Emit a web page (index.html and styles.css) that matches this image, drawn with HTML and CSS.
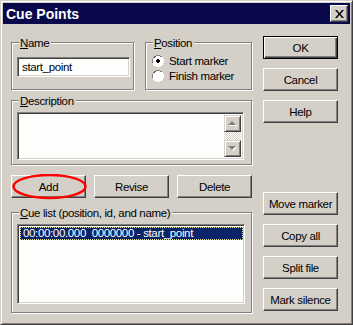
FILE: index.html
```html
<!DOCTYPE html>
<html lang="en">
<head>
    <meta charset="UTF-8">
    <title>Cue Points</title>
    <link rel="stylesheet" href="styles.css">
</head>
<body>

    <div class="window">
        <!-- Title bar -->
        <div class="titlebar">
            <span class="title">Cue Points</span>
            <button class="close" title="Close">
                <svg width="9" height="8" viewBox="0 0 9 8">
                    <path d="M0 0h2l2.5 3 2.5-3h2l-3.5 4 3.5 4h-2l-2.5-3-2.5 3h-2l3.5-4z" fill="#000"/>
                </svg>
            </button>
        </div>

        <div class="content">
            <div class="main">
                <div class="top-row">
                    <div class="group name-group">
                        <span class="legend"><u>N</u>ame</span>
                        <div class="field name-field">start_point</div>
                    </div>
                    <div class="group position-group">
                        <span class="legend"><u>P</u>osition</span>
                        <div class="radio">
                            <svg width="12" height="12" viewBox="0 0 12 12">
                                <path d="M4 0h4v1h2v1h1v2h1v4h-1v2h-1v1h-2v1h-4v-1h-2v-1h-1v-2h-1v-4h1v-2h1v-1h2z" fill="#fff"/>
                                <path d="M4 0h4v1h2v1h-2v-1h-4v1h-2v2h-1v4h-1v-4h1v-2h1v-1h2z" fill="#808080"/>
                                <path d="M4 1h4v1h2v1h-2v-1h-4v1h-1v1h-1v4h-1v-4h1v-2h1v-1h1z" fill="#404040"/>
                                <path d="M2 3h1v-1h1v-1h4v1h2v2h1v4h-1v2h-2v1h-4v-1h-2v-2h-1v-4z" fill="#fff"/>
                                <path d="M5 4h2v1h1v2h-1v1h-2v-1h-1v-2h1z" fill="#000"/>
                            </svg>
                            <span>Start marker</span>
                        </div>
                        <div class="radio">
                            <svg width="12" height="12" viewBox="0 0 12 12">
                                <path d="M4 0h4v1h2v1h1v2h1v4h-1v2h-1v1h-2v1h-4v-1h-2v-1h-1v-2h-1v-4h1v-2h1v-1h2z" fill="#fff"/>
                                <path d="M4 0h4v1h2v1h-2v-1h-4v1h-2v2h-1v4h-1v-4h1v-2h1v-1h2z" fill="#808080"/>
                                <path d="M4 1h4v1h2v1h-2v-1h-4v1h-1v1h-1v4h-1v-4h1v-2h1v-1h1z" fill="#404040"/>
                                <path d="M2 3h1v-1h1v-1h4v1h2v2h1v4h-1v2h-2v1h-4v-1h-2v-2h-1v-4z" fill="#fff"/>
                            </svg>
                            <span>Finish marker</span>
                        </div>
                    </div>
                </div>

                <!-- Description -->
                <div class="group desc-group">
                    <span class="legend"><u>D</u>escription</span>
                    <div class="field desc-field">
                        <div class="desc-text"></div>
                        <div class="scrollbar">
                            <div class="scroll-btn">
                                <svg width="9" height="6" viewBox="0 0 9 6">
                                    <path d="M1 5h8l-4-4z" fill="#fff"/>
                                    <path d="M0 4h8l-4-4z" fill="#808080"/>
                                </svg>
                            </div>
                            <div class="scroll-track"></div>
                            <div class="scroll-btn">
                                <svg width="9" height="6" viewBox="0 0 9 6">
                                    <path d="M1 1h8l-4 4z" fill="#fff"/>
                                    <path d="M0 0h8l-4 4z" fill="#808080"/>
                                </svg>
                            </div>
                        </div>
                    </div>
                </div>

                <div class="action-row">
                    <div class="btn-wrap">
                        <button class="btn">Add</button>
                        <svg class="circle-mark" width="76" height="26" viewBox="0 0 76 26">
                            <ellipse cx="37.5" cy="12.5" rx="36" ry="11.5" fill="none" stroke="#f00" stroke-width="2.5"/>
                        </svg>
                    </div>
                    <button class="btn">Revise</button>
                    <button class="btn">Delete</button>
                </div>

                <!-- Cue list -->
                <div class="group cue-group">
                    <span class="legend"><u>C</u>ue list (position, id, and name)</span>
                    <div class="field cue-list">
                        <div class="cue-row selected">00:00:00.000  0000000 - start_point</div>
                    </div>
                </div>
            </div>

            <div class="side">
                <button class="btn default">OK</button>
                <button class="btn">Cancel</button>
                <button class="btn">Help</button>
                <button class="btn move-btn">Move marker</button>
                <button class="btn">Copy all</button>
                <button class="btn">Split file</button>
                <button class="btn">Mark silence</button>
            </div>
        </div>
    </div>

</body>
</html>
```

FILE: styles.css
```css
/* General Styles */
* {
    margin: 0;
    padding: 0;
    box-sizing: border-box;
}

body {
    font-family: 'Liberation Sans', Arial, sans-serif;
    font-size: 11.5px;
    letter-spacing: -0.35px;
    color: #000;
    background-color: #d4d0c8;
}

.window {
    width: 353px;
    height: 325px;
    padding: 2px;
    background-color: #d4d0c8;
    border: 1px solid;
    border-color: #d4d0c8 #404040 #404040 #d4d0c8;
    box-shadow: inset 1px 1px 0 #fff, inset -1px -1px 0 #808080;
}

/* Title bar */
.titlebar {
    height: 21px;
    background-color: #08084a;
    display: flex;
    align-items: center;
    justify-content: space-between;
    padding: 0 2px 0 3px;
}

.title {
    color: #fff;
    font-weight: bold;
    font-size: 14px;
    letter-spacing: 0;
}

.close {
    width: 18px;
    height: 17px;
    display: flex;
    align-items: center;
    justify-content: center;
    background-color: #d4d0c8;
    border: 1px solid;
    border-color: #fff #404040 #404040 #fff;
    box-shadow: inset -1px -1px 0 #808080;
}

/* Layout */
.content {
    display: flex;
    padding-left: 8px;
}

.main {
    width: 241px;
    margin-top: 18px;
}

.side {
    width: 75px;
    margin-left: 11px;
    margin-top: 12px;
    display: flex;
    flex-direction: column;
    gap: 9px;
}

.top-row {
    display: flex;
    gap: 11px;
}

/* Group boxes */
.group {
    display: flex;
    flex-direction: column;
    align-items: flex-start;
    padding: 0 5px;
    border: 1px solid #808080;
    box-shadow: inset 1px 1px 0 #fff, 1px 1px 0 #fff;
}

.legend {
    margin: -7px 0 0 2px;
    padding: 0 2px 0 1px;
    line-height: 14px;
    background-color: #d4d0c8;
    white-space: nowrap;
}

.name-group {
    width: 123px;
    height: 48px;
}

.position-group {
    width: 107px;
    height: 48px;
}

.desc-group {
    height: 65px;
    margin-top: 10px;
}

.cue-group {
    height: 101px;
    margin-top: 14px;
}

/* Sunken fields */
.field {
    background-color: #fcfffc;
    border: 1px solid;
    border-color: #808080 #fff #fff #808080;
    box-shadow: inset 1px 1px 0 #404040, inset -1px -1px 0 #d4d0c8;
}

.name-field {
    width: 113px;
    height: 20px;
    margin-top: 7px;
    padding: 3px 0 0 4px;
    line-height: 13px;
}

.radio {
    display: flex;
    align-items: center;
    gap: 5px;
    height: 15px;
    margin-left: 1px;
}

.radio:first-of-type {
    margin-top: 3px;
}

.desc-field {
    width: 227px;
    height: 48px;
    margin-top: 4px;
    padding: 2px;
    display: flex;
}

.desc-text {
    flex: 1;
}

.scrollbar {
    width: 17px;
    display: flex;
    flex-direction: column;
}

.scroll-btn {
    height: 17px;
    display: flex;
    align-items: center;
    justify-content: center;
    background-color: #d4d0c8;
    border: 1px solid;
    border-color: #d4d0c8 #404040 #404040 #d4d0c8;
    box-shadow: inset 1px 1px 0 #fff, inset -1px -1px 0 #808080;
}

.scroll-track {
    flex: 1;
    background-color: #ece9e4;
    background-image: repeating-conic-gradient(#fff 0 25%, #d4d0c8 0 50%);
    background-size: 2px 2px;
}

.cue-list {
    width: 228px;
    height: 80px;
    margin-top: 4px;
    padding: 2px 1px 0 2px;
}

.cue-row {
    height: 13px;
    line-height: 13px;
    padding-left: 3px;
    white-space: pre;
}

.cue-row.selected {
    background-color: #0a246a;
    color: #fff;
    outline: 1px dotted #e8e8a0;
    outline-offset: -1px;
}

/* Buttons */
.btn {
    width: 75px;
    height: 23px;
    font-family: inherit;
    font-size: 11.5px;
    letter-spacing: -0.35px;
    color: #000;
    background-color: #d4d0c8;
    border: 1px solid;
    border-color: #fff #404040 #404040 #fff;
    box-shadow: inset -1px -1px 0 #808080;
}

.btn.default {
    border: 1px solid #000;
    box-shadow: inset 1px 1px 0 #fff, inset -1px -1px 0 #404040, inset -2px -2px 0 #808080;
}

.move-btn {
    margin-top: 60px;
}

.action-row {
    display: flex;
    gap: 8px;
    margin-top: 10px;
}

.btn-wrap {
    position: relative;
}

.circle-mark {
    position: absolute;
    left: 1px;
    top: -1px;
    pointer-events: none;
}
```
